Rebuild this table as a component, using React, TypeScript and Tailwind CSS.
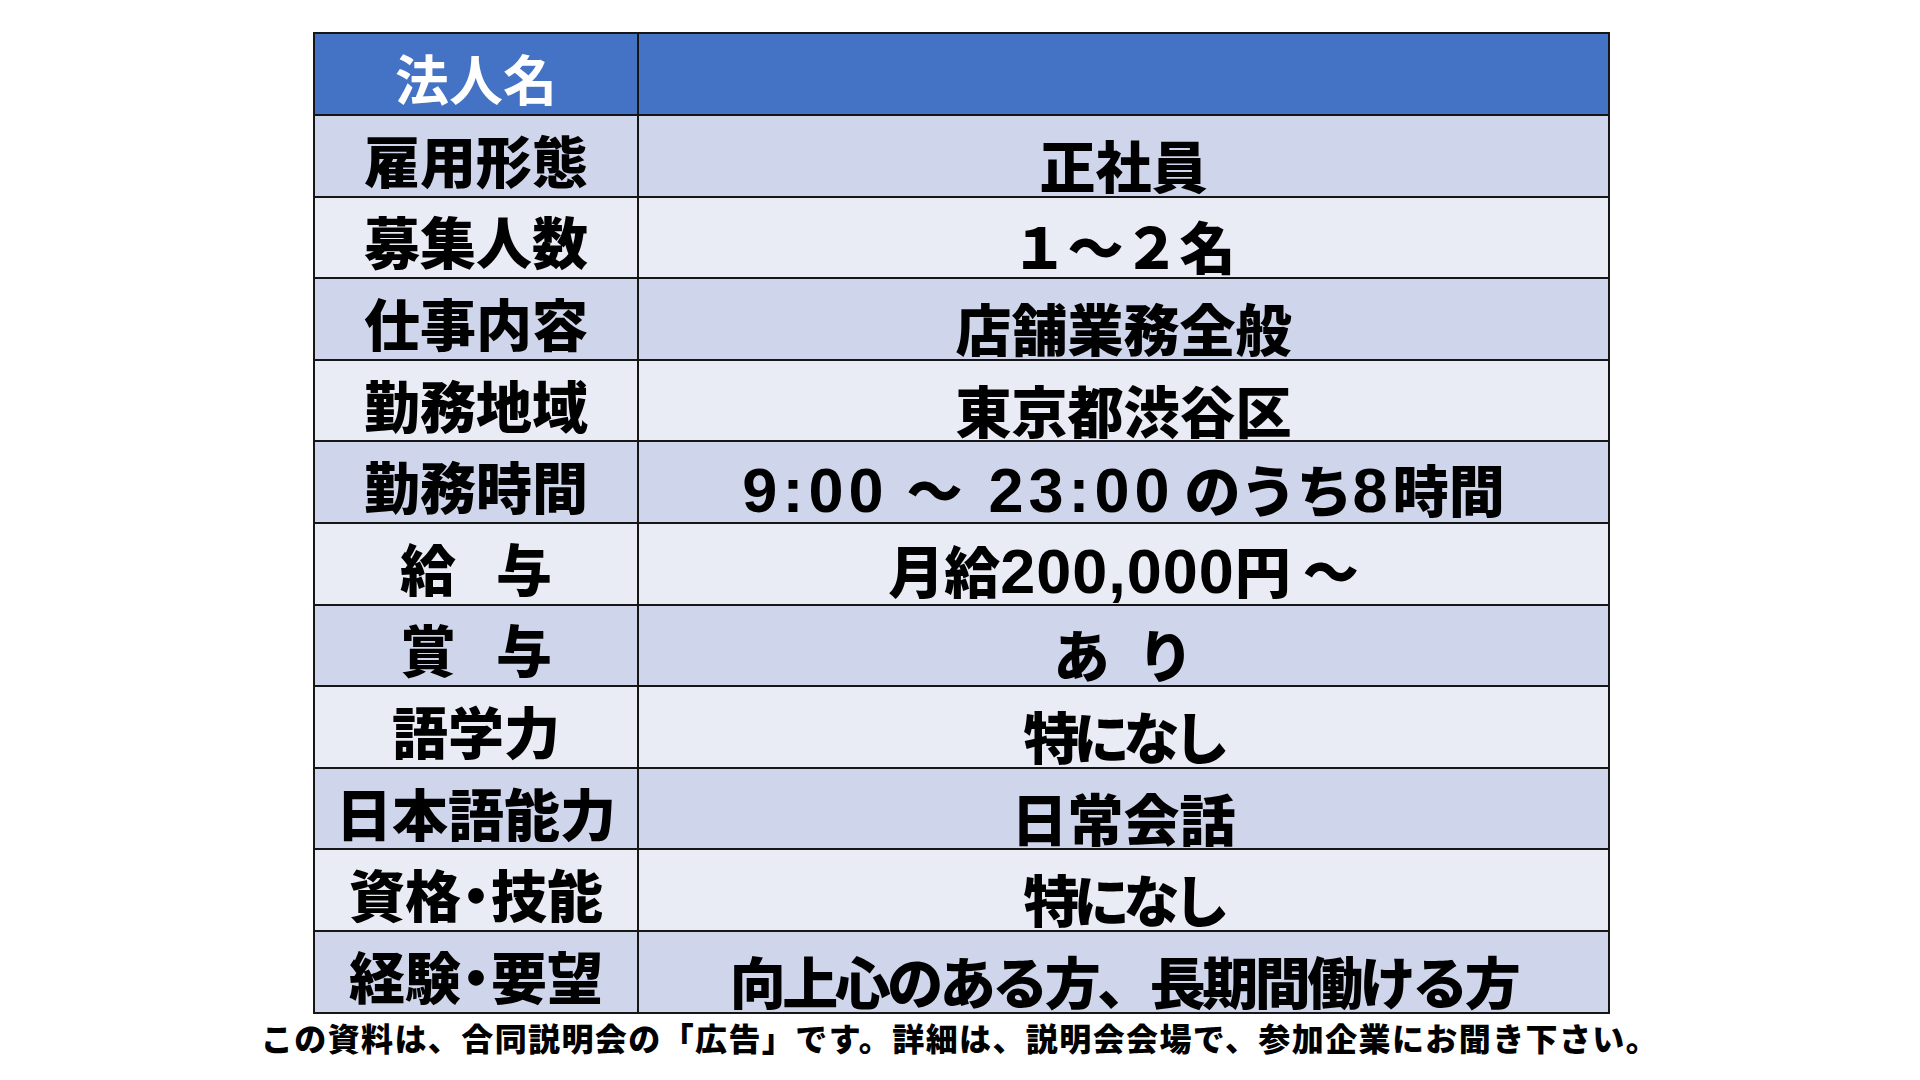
import type { ReactNode } from 'react';

/* ── Fonts ── */

const jp = "font-['Noto_Sans_CJK_JP','Noto_Sans_CJK_SC',sans-serif]";
const latin = "font-['Liberation_Sans','Noto_Sans_CJK_JP',sans-serif]";

/* Latin digits run larger than the kana around them */
function Num({ children, tight }: { children: ReactNode; tight?: boolean }) {
  return (
    <span className={`${latin} text-[63px] font-bold ${tight ? 'tracking-[1px]' : 'tracking-[5px]'}`}>
      {children}
    </span>
  );
}

function Gap({ w }: { w: string }) {
  return <span className={`inline-block ${w}`} />;
}

/* full-width dot squeezed to a narrow advance */
function Dot() {
  return <span className="-mx-[13px]">・</span>;
}

type Row = { label: ReactNode; value: ReactNode; valueClass?: string };

const rows: Row[] = [
  { label: '雇用形態', value: '正社員' },
  { label: '募集人数', value: '１～２名' },
  { label: '仕事内容', value: '店舗業務全般' },
  { label: '勤務地域', value: '東京都渋谷区' },
  {
    label: '勤務時間',
    value: (
      <>
        <Num>9:00</Num>
        <Gap w="w-[18px]" />～<Gap w="w-[26px]" />
        <Num>23:00</Num>
        <Gap w="w-[10px]" />のうち<Num>8</Num>時間
      </>
    ),
  },
  {
    label: (
      <>
        給<Gap w="w-[40px]" />与
      </>
    ),
    value: (
      <>
        月給<Num tight>200,000</Num>円<Gap w="w-[12px]" />～
      </>
    ),
  },
  {
    label: (
      <>
        賞<Gap w="w-[40px]" />与
      </>
    ),
    value: (
      <>
        あ<Gap w="w-[28px]" />り
      </>
    ),
  },
  { label: '語学力', value: '特になし', valueClass: 'tracking-[-6px]' },
  { label: '日本語能力', value: '日常会話' },
  {
    label: (
      <>
        資格<Dot />技能
      </>
    ),
    value: '特になし',
    valueClass: 'tracking-[-6px]',
  },
  {
    label: (
      <>
        経験<Dot />要望
      </>
    ),
    value: '向上心のある方、長期間働ける方',
    valueClass: 'tracking-[-3.5px]',
  },
];

export default function App() {
  return (
    <div className={`w-[1920px] h-[1080px] bg-white overflow-hidden ${jp}`}>
      <div className="w-[1297px] ml-[313px] pt-[32px]">
        <table className="w-full border-collapse border-2 border-[#161616] table-fixed">
          <colgroup>
            <col className="w-[324px]" />
            <col />
          </colgroup>
          <tbody>
            {/* ── Header ── */}
            <tr className="h-[82px] bg-[#4472c4]">
              <td className="border-2 border-[#161616] p-0 pt-[8px] text-center text-white text-[54px] font-bold leading-none">
                法人名
              </td>
              <td className="border-2 border-[#161616] p-0" />
            </tr>

            {/* ── Body ── */}
            {rows.map((row, i) => (
              <tr
                key={i}
                className={`h-[81.6px] ${i % 2 === 0 ? 'bg-[#cfd5ea]' : 'bg-[#e9ebf5]'}`}
              >
                <td className="border-2 border-[#161616] p-0 pt-[6px] text-center text-black text-[56px] font-black leading-none whitespace-nowrap">
                  {row.label}
                </td>
                <td
                  className={`border-2 border-[#161616] p-0 pt-[16px] text-center text-black text-[56px] font-black leading-none whitespace-nowrap ${row.valueClass ?? ''}`}
                >
                  {row.value}
                </td>
              </tr>
            ))}
          </tbody>
        </table>
      </div>

      {/* ── Footnote ── */}
      <p className="text-center text-black text-[32px] font-black tracking-[1.4px] leading-none mt-[7px]">
        この資料は、合同説明会の「広告」です。詳細は、説明会会場で、参加企業にお聞き下さい。
      </p>
    </div>
  );
}
